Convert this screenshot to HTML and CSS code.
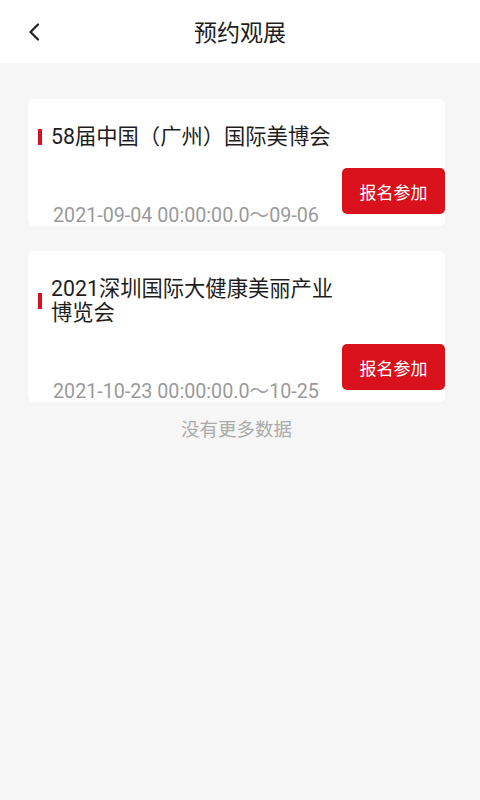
FILE: index.html
```html
<!DOCTYPE html>
<html lang="zh-CN">
<head>
<meta charset="utf-8">
<title>预约观展</title>
<link rel="stylesheet" href="styles.css">
</head>
<body>
<header class="nav">
  <button class="back" type="button" aria-label="返回">
    <svg width="12" height="18" viewBox="0 0 12 18"><path d="M10 1.5 L2.5 9 L10 16.5" fill="none" stroke="#222" stroke-width="2.2" stroke-linecap="round" stroke-linejoin="round"/></svg>
  </button>
  <h1 class="nav-title">预约观展</h1>
</header>
<main class="list">
  <article class="card">
    <div class="card-head">
      <span class="mark"></span>
      <h2 class="card-title">58届中国（广州）国际美博会</h2>
    </div>
    <div class="card-foot">
      <span class="date">2021-09-04 00:00:00.0～09-06</span>
      <a class="btn">报名参加</a>
    </div>
  </article>
  <article class="card">
    <div class="card-head">
      <span class="mark"></span>
      <h2 class="card-title">2021深圳国际大健康美丽产业博览会</h2>
    </div>
    <div class="card-foot">
      <span class="date">2021-10-23 00:00:00.0～10-25</span>
      <a class="btn">报名参加</a>
    </div>
  </article>
  <p class="no-more">没有更多数据</p>
</main>
</body>
</html>
```
FILE: styles.css
```css
* { box-sizing: border-box; }
html, body {
  margin: 0;
  padding: 0;
}
body {
  width: 480px;
  min-height: 800px;
  background: #f6f6f6;
  font-family: Roboto, "Noto Sans CJK SC", sans-serif;
  color: #222;
}
.nav {
  height: 63px;
  background: #fff;
  display: flex;
  align-items: center;
  justify-content: center;
  position: relative;
}
.back {
  position: absolute;
  left: 26px;
  top: 22px;
  width: 16px;
  height: 20px;
  padding: 0;
  border: 0;
  background: none;
  display: flex;
  align-items: center;
  justify-content: center;
}
.nav-title {
  margin: 0;
  font-size: 23px;
  font-weight: 400;
  line-height: 28px;
  color: #1e1e1e;
  padding-top: 4px;
}
.list {
  padding: 36px 35px 0 28px;
  display: flex;
  flex-direction: column;
  gap: 25px;
}
.card {
  background: #fff;
  border-radius: 6px;
  padding: 26px 0 0 10px;
  overflow: hidden;
}
.card-head {
  display: flex;
  align-items: center;
}
.mark {
  flex: none;
  width: 4px;
  height: 16px;
  background: #d7121e;
  margin-right: 9px;
}
.card-title {
  margin: 0;
  max-width: 290px;
  font-size: 21.3px;
  font-weight: 400;
  line-height: 24px;
  color: #1e1e1e;
}
.card-foot {
  display: flex;
  justify-content: space-between;
  align-items: flex-end;
  margin-top: 19px;
}
.date {
  padding-left: 15px;
  font-size: 19.7px;
  line-height: 20px;
  color: #9a9a9a;
  white-space: nowrap;
}
.btn {
  flex: none;
  width: 103px;
  height: 46px;
  margin-bottom: 12px;
  background: #d8111d;
  border-radius: 5px;
  color: #fff;
  font-size: 17px;
  display: flex;
  align-items: center;
  justify-content: center;
}
.no-more {
  margin: -9px 0 0;
  text-align: center;
  font-size: 18.5px;
  line-height: 24px;
  color: #ababab;
}
```
